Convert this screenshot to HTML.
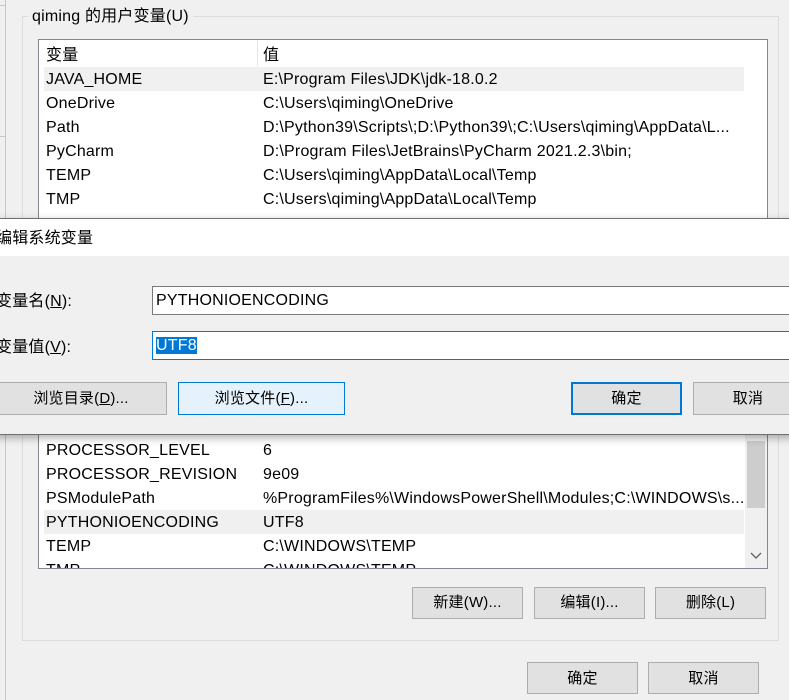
<!DOCTYPE html>
<html><head><meta charset="utf-8"><style>
*{margin:0;padding:0;box-sizing:border-box}
body{width:789px;height:700px;overflow:hidden;background:#f0f0f0;position:relative;font:16px "Liberation Sans","Noto Sans CJK SC",sans-serif;letter-spacing:0.2px;color:#000}
.a{position:absolute}
.row{position:absolute;left:8px;height:24px;line-height:24px;width:698px}
.row span{position:absolute;left:0;white-space:nowrap}
.row span+span{left:217px}
.hl{background:#f0f0f0}
.btn{position:absolute;height:32px;background:#e1e1e1;border:1px solid #adadad;text-align:center;line-height:30px;font-size:15px}
.inp{position:absolute;background:#fff;border:1px solid #7a7a7a;height:29px;line-height:27px;padding-left:3px}
u{text-decoration:underline}
</style></head><body>
<div class="a" style="left:5px;top:0;width:1px;height:700px;background:#c8c8c8"></div>
<div class="a" style="left:0;top:5px;width:5px;height:1px;background:#c8c8c8"></div>
<div class="a" style="left:0;top:136px;width:5px;height:1px;background:#c8c8c8"></div>
<div class="a" style="left:22px;top:16px;width:757px;height:625px;border:1px solid #dcdcdc"></div>
<div class="a" style="left:28px;top:6px;padding:0 4px;background:#f0f0f0;line-height:22px">qiming 的用户变量(U)</div>
<div class="a" style="left:38px;top:39px;width:730px;height:200px;background:#fff;border:1px solid #828790">
 <div class="a" style="left:218px;top:0;width:1px;height:26px;background:#e5e5e5"></div>
 <div class="row" style="top:4px;left:7px"><span>变量</span><span>值</span></div>
 <div class="row hl" style="top:27px;left:5px;width:700px"><span style="left:2px;top:1px">JAVA_HOME</span><span style="left:219px;top:1px">E:\Program Files\JDK\jdk-18.0.2</span></div>
 <div class="row" style="top:52px;left:7px"><span>OneDrive</span><span>C:\Users\qiming\OneDrive</span></div>
 <div class="row" style="top:76px;left:7px"><span>Path</span><span>D:\Python39\Scripts\;D:\Python39\;C:\Users\qiming\AppData\L...</span></div>
 <div class="row" style="top:100px;left:7px"><span>PyCharm</span><span>D:\Program Files\JetBrains\PyCharm 2021.2.3\bin;</span></div>
 <div class="row" style="top:124px;left:7px"><span>TEMP</span><span>C:\Users\qiming\AppData\Local\Temp</span></div>
 <div class="row" style="top:148px;left:7px"><span>TMP</span><span>C:\Users\qiming\AppData\Local\Temp</span></div>
</div>
<div class="a" style="left:38px;top:420px;width:730px;height:149px;background:#fff;border:1px solid #828790;overflow:hidden">
 <div class="row" style="top:18px;left:7px"><span>PROCESSOR_LEVEL</span><span>6</span></div>
 <div class="row" style="top:42px;left:7px"><span>PROCESSOR_REVISION</span><span>9e09</span></div>
 <div class="row" style="top:66px;left:7px"><span>PSModulePath</span><span>%ProgramFiles%\WindowsPowerShell\Modules;C:\WINDOWS\s...</span></div>
 <div class="row hl" style="top:89px;left:5px;width:700px"><span style="left:2px;top:1px">PYTHONIOENCODING</span><span style="left:219px;top:1px">UTF8</span></div>
 <div class="row" style="top:114px;left:7px"><span>TEMP</span><span>C:\WINDOWS\TEMP</span></div>
 <div class="row" style="top:138px;left:7px"><span>TMP</span><span>C:\WINDOWS\TEMP</span></div>
 <div class="a" style="left:706px;top:0;width:22px;height:148px;background:#f0f0f0"></div>
 <div class="a" style="left:708px;top:20px;width:18px;height:67px;background:#cdcdcd"></div>
 <svg class="a" style="left:711px;top:131px" width="12" height="8"><path d="M1 1 L6 6 L11 1" stroke="#606060" stroke-width="1.3" fill="none"/></svg>
</div>
<div class="btn" style="left:412px;top:587px;width:111px">新建(W)...</div>
<div class="btn" style="left:534px;top:587px;width:111px">编辑(I)...</div>
<div class="btn" style="left:655px;top:587px;width:111px">删除(L)</div>
<div class="btn" style="left:527px;top:662px;width:111px;line-height:32px">确定</div>
<div class="btn" style="left:648px;top:662px;width:111px;line-height:32px">取消</div>

<div class="a" style="left:-5px;top:218px;width:800px;height:217px;background:#f0f0f0;border:1px solid #6f6f6f;box-shadow:0 3px 8px rgba(0,0,0,.3)">
 <div class="a" style="left:0;top:0;width:800px;height:37px;background:#fff"></div>
 <div class="a" style="left:0;top:9px;line-height:22px">编辑系统变量</div>
 <div class="a" style="left:0;top:72px;line-height:22px">变量名(<u>N</u>):</div>
 <div class="a" style="left:0;top:118px;line-height:22px">变量值(<u>V</u>):</div>
</div>
<div class="inp" style="left:152px;top:286px;width:650px">PYTHONIOENCODING</div>
<div class="inp" style="left:152px;top:331px;width:650px;border-color:#0078d7"><span style="background:#0078d7;color:#fff">UTF8</span></div>
<div class="btn" style="left:-5px;top:382px;width:172px;height:33px;line-height:32px">浏览目录(<u>D</u>)...</div>
<div class="btn" style="left:178px;top:382px;width:167px;height:33px;line-height:32px;background:#e5f1fb;border-color:#0078d7">浏览文件(<u>F</u>)...</div>
<div class="btn" style="left:571px;top:382px;width:111px;height:33px;border:2px solid #0078d7;line-height:30px">确定</div>
<div class="btn" style="left:693px;top:382px;width:110px;height:33px;line-height:32px">取消</div>
</body></html>
